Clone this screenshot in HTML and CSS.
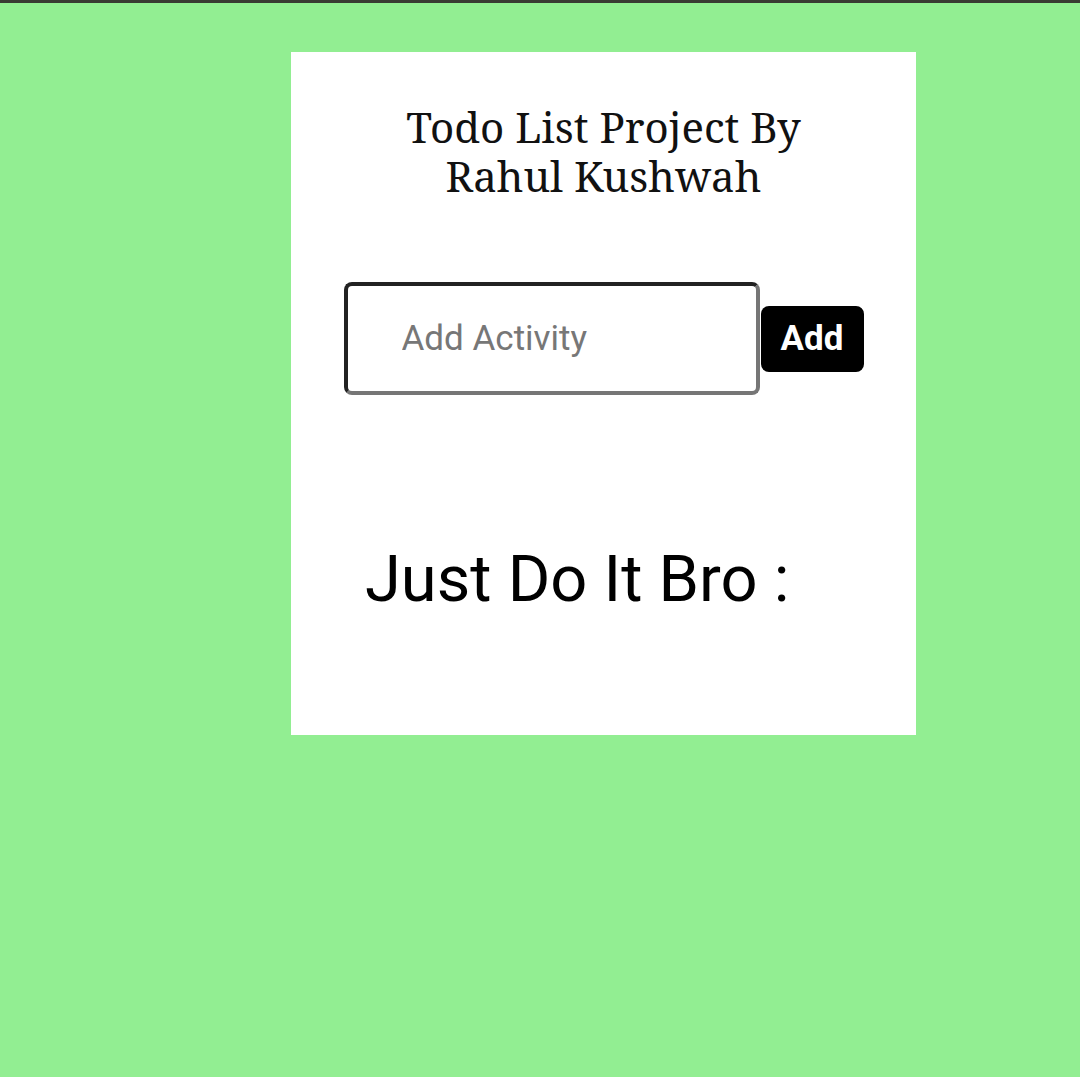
FILE: index.html
```html
<!DOCTYPE html>
<html>
<head>
<meta charset="utf-8">
<link rel="stylesheet" href="styles.css">
</head>
<body>
<div class="topbar"></div>
<main class="page">
  <section class="card">
    <h1 class="title">Todo List Project By<br>Rahul Kushwah</h1>
    <div class="add-row">
      <input class="activity" type="text" placeholder="Add Activity">
      <button class="add-btn">Add</button>
    </div>
    <h2 class="motto">Just Do It Bro :</h2>
  </section>
</main>
</body>
</html>
```

FILE: styles.css
```css
html, body {
  margin: 0;
  padding: 0;
}
body {
  background: #92ee92;
  height: 1077px;
  overflow: hidden;
  font-family: Roboto, "Liberation Sans", sans-serif;
}
.topbar {
  height: 3px;
  background: #3a3b33;
}
.page {
  padding: 49px 0 0 291px;
}
.card {
  width: 625px;
  height: 683px;
  background: #ffffff;
  box-sizing: border-box;
  padding-top: 50px;
}
.title {
  margin: 0;
  text-align: center;
  font-family: "Noto Serif", "DejaVu Serif", serif;
  font-weight: normal;
  font-size: 42px;
  line-height: 49px;
  color: #111;
}
.add-row {
  display: flex;
  align-items: center;
  justify-content: center;
  gap: 1px;
  margin-top: 82px;
}
.activity {
  width: 416px;
  height: 113px;
  box-sizing: border-box;
  border: 4px solid;
  border-color: #222 #767676 #767676 #222;
  border-radius: 8px;
  padding: 0 0 0 54px;
  font-family: Roboto, sans-serif;
  font-size: 35px;
  color: #333;
  outline: none;
}
.activity::placeholder {
  color: #777;
}
.add-btn {
  width: 103px;
  height: 66px;
  background: #000;
  color: #fff;
  border: none;
  border-radius: 8px;
  font-family: Roboto, sans-serif;
  font-weight: bold;
  font-size: 35px;
  padding: 0;
}
.motto {
  margin: 149px 0 0 74px;
  font-family: Roboto, sans-serif;
  font-weight: normal;
  font-size: 65px;
  line-height: 70px;
  color: #000;
}
```
